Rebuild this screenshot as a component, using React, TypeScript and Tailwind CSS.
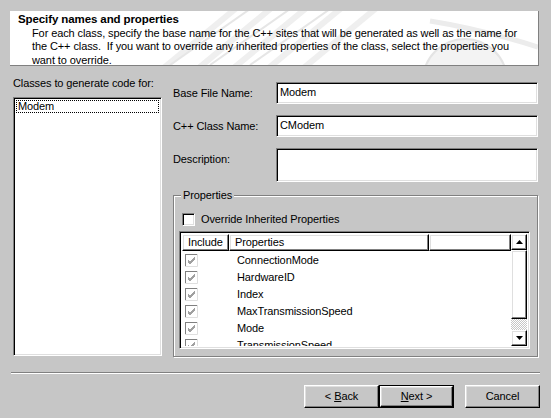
import type { ReactNode } from 'react'

const properties = [
  'ConnectionMode',
  'HardwareID',
  'Index',
  'MaxTransmissionSpeed',
  'Mode',
  'TransmissionSpeed',
]

const sunken =
  'border border-t-[#808080] border-l-[#808080] border-r-white border-b-white shadow-[inset_1px_1px_0_#000,inset_-1px_-1px_0_#dfdfdf]'
const raised =
  'border border-t-white border-l-white border-r-black border-b-black shadow-[inset_-1px_-1px_0_#808080,inset_1px_1px_0_#dfdfdf]'

function Watermark() {
  return (
    <svg className="absolute inset-0 h-full w-full" viewBox="0 0 528 54" preserveAspectRatio="none">
      <g fill="none" stroke="#efefef" strokeWidth="6">
        <path d="M150 60 L230 -6" />
        <path d="M185 60 L265 -6" />
        <path d="M220 60 L300 -6" />
        <path d="M255 60 L335 -6" />
        <path d="M290 60 L370 -6" />
      </g>
      <g fill="none" stroke="#e6e6e6" strokeWidth="2">
        <path d="M160 54 L240 -2" />
        <path d="M200 54 L280 -2" />
        <path d="M240 54 L320 -2" />
      </g>
      <path d="M420 10 Q470 18 528 36" stroke="#ececec" strokeWidth="5" fill="none" />
      <circle cx="455" cy="70" r="42" fill="#f3f3f3" stroke="#e4e4e4" strokeWidth="2" />
      <circle cx="455" cy="70" r="12" fill="#fff" stroke="#dcdcdc" strokeWidth="2" />
    </svg>
  )
}

function TextInput({ value, tall }: { value?: string; tall?: boolean }) {
  return (
    <div className={`${sunken} w-[262px] bg-white pl-[3px] ${tall ? 'h-[34px]' : 'h-[22px] leading-[19px]'}`}>
      {value}
    </div>
  )
}

function Field({ label, children, tall }: { label: string; children: ReactNode; tall?: boolean }) {
  return (
    <div className={`flex ${tall ? 'items-start' : 'items-center'}`}>
      <span className={`w-[103px] ${tall ? 'pt-[3px]' : ''}`}>{label}</span>
      {children}
    </div>
  )
}

function GrayCheck() {
  return (
    <svg width="13" height="13" viewBox="0 0 13 13">
      <rect x="0" y="0" width="13" height="13" fill="#fff" />
      <path d="M0 12.5 V0.5 H12.5" stroke="#808080" fill="none" />
      <path d="M0.5 13 V0.5" stroke="#808080" fill="none" />
      <path d="M12.5 0 V12.5 H0" stroke="#dfdfdf" fill="none" />
      <path d="M3 6 L5 8 L10 3 M3 7 L5 9 L10 4 M3 8 L5 10 L10 5" stroke="#a0a0a0" fill="none" />
    </svg>
  )
}

function Arrow({ up }: { up?: boolean }) {
  return (
    <svg width="7" height="4" viewBox="0 0 7 4">
      <path d={up ? 'M3.5 0 L7 4 L0 4 Z' : 'M0 0 L7 0 L3.5 4 Z'} fill="#000" />
    </svg>
  )
}

function Button({ children, primary }: { children: ReactNode; primary?: boolean }) {
  return (
    <div className={primary ? 'border border-black' : ''}>
      <div
        className={`${raised} flex items-center justify-center ${primary ? 'h-[21px] w-[73px]' : 'h-[23px] w-[75px]'}`}
      >
        {children}
      </div>
    </div>
  )
}

export default function App() {
  return (
    <div className="relative h-[418px] w-[551px] overflow-hidden bg-[#c6c6c6] font-['Liberation_Sans',Arial,sans-serif] text-[11px] tracking-[-0.1px] text-black">
      <header className="relative mx-[10px] mt-[11px] h-[55px] w-[529px] overflow-hidden border-r border-b border-[#808080] bg-white">
        <Watermark />
        <div className="relative pl-[8px] pt-[2px] leading-[13.5px]">
          <h1 className="text-[11.5px] font-bold">Specify names and properties</h1>
          <p className="pl-[14px] pr-[20px]">
            For each class, specify the base name for the C++ sites that will be generated as well as the name for
            the C++ class.&nbsp; If you want to override any inherited properties of the class, select the properties
            you want to override.
          </p>
        </div>
      </header>

      <div className="mt-[11px] flex">
        <div className="ml-[13px] w-[149px]">
          <div className="h-[13px] leading-[13px]">Classes to generate code for:</div>
          <div className={`${sunken} mt-[7px] h-[259px] bg-white p-[2px]`}>
            <div className="h-[13px] border border-dotted border-black pl-[1px] leading-[11px]">Modem</div>
          </div>
        </div>

        <div className="ml-[11px] mt-[5px] flex w-[365px] flex-col">
          <div className="flex flex-col gap-[11px]">
            <Field label="Base File Name:">
              <TextInput value="Modem" />
            </Field>
            <Field label="C++ Class Name:">
              <TextInput value="CModem" />
            </Field>
            <Field label="Description:" tall>
              <TextInput tall />
            </Field>
          </div>

          <fieldset className="relative mt-[13px] h-[162px] border border-[#808080] pl-[5px] pr-[7px] shadow-[1px_1px_0_#fff,inset_1px_1px_0_#fff]">
            <span className="absolute -top-[7px] left-[7px] bg-[#c6c6c6] px-[2px] leading-[13px]">Properties</span>
            <label className="mt-[15px] ml-[3px] flex items-center gap-[6px]">
              <span className={`${sunken} h-[13px] w-[13px] bg-white`} />
              <span>Override Inherited Properties</span>
            </label>
            <div className={`${sunken} mt-[3px] flex h-[118px] bg-white p-[2px]`}>
              <div className="flex-1 overflow-hidden">
                <div className="flex h-[17px]">
                  <div className={`${raised} w-[47px] pl-[5px] leading-[15px]`}>Include</div>
                  <div className={`${raised} w-[200px] pl-[5px] leading-[15px]`}>Properties</div>
                  <div className={`${raised} flex-1`} />
                </div>
                <ul className="pt-[1px]">
                  {properties.map((name) => (
                    <li key={name} className="flex h-[17px] items-center">
                      <span className="ml-[3px] w-[52px]">
                        <GrayCheck />
                      </span>
                      <span>{name}</span>
                    </li>
                  ))}
                </ul>
              </div>
              <div className="flex w-[16px] flex-col">
                <div className={`${raised} flex h-[16px] items-center justify-center`}>
                  <Arrow up />
                </div>
                <div className={`${raised} h-[69px]`} />
                <div className="flex-1 bg-[repeating-conic-gradient(#c6c6c6_0_25%,#fff_0_50%)] bg-[length:2px_2px]" />
                <div className={`${raised} flex h-[16px] items-center justify-center`}>
                  <Arrow />
                </div>
              </div>
            </div>
          </fieldset>
        </div>
      </div>

      <div className="mx-[11px] mt-[15px] h-[2px] w-[529px] border-t border-b border-t-[#808080] border-b-white" />

      <div className="mt-[11px] mr-[11px] flex justify-end">
        <div className="flex">
          <Button>
            &lt; <span className="ml-[3px] underline">B</span>ack
          </Button>
          <Button primary>
            <span className="underline">N</span>ext &gt;
          </Button>
        </div>
        <div className="ml-[11px]">
          <Button>Cancel</Button>
        </div>
      </div>
    </div>
  )
}
